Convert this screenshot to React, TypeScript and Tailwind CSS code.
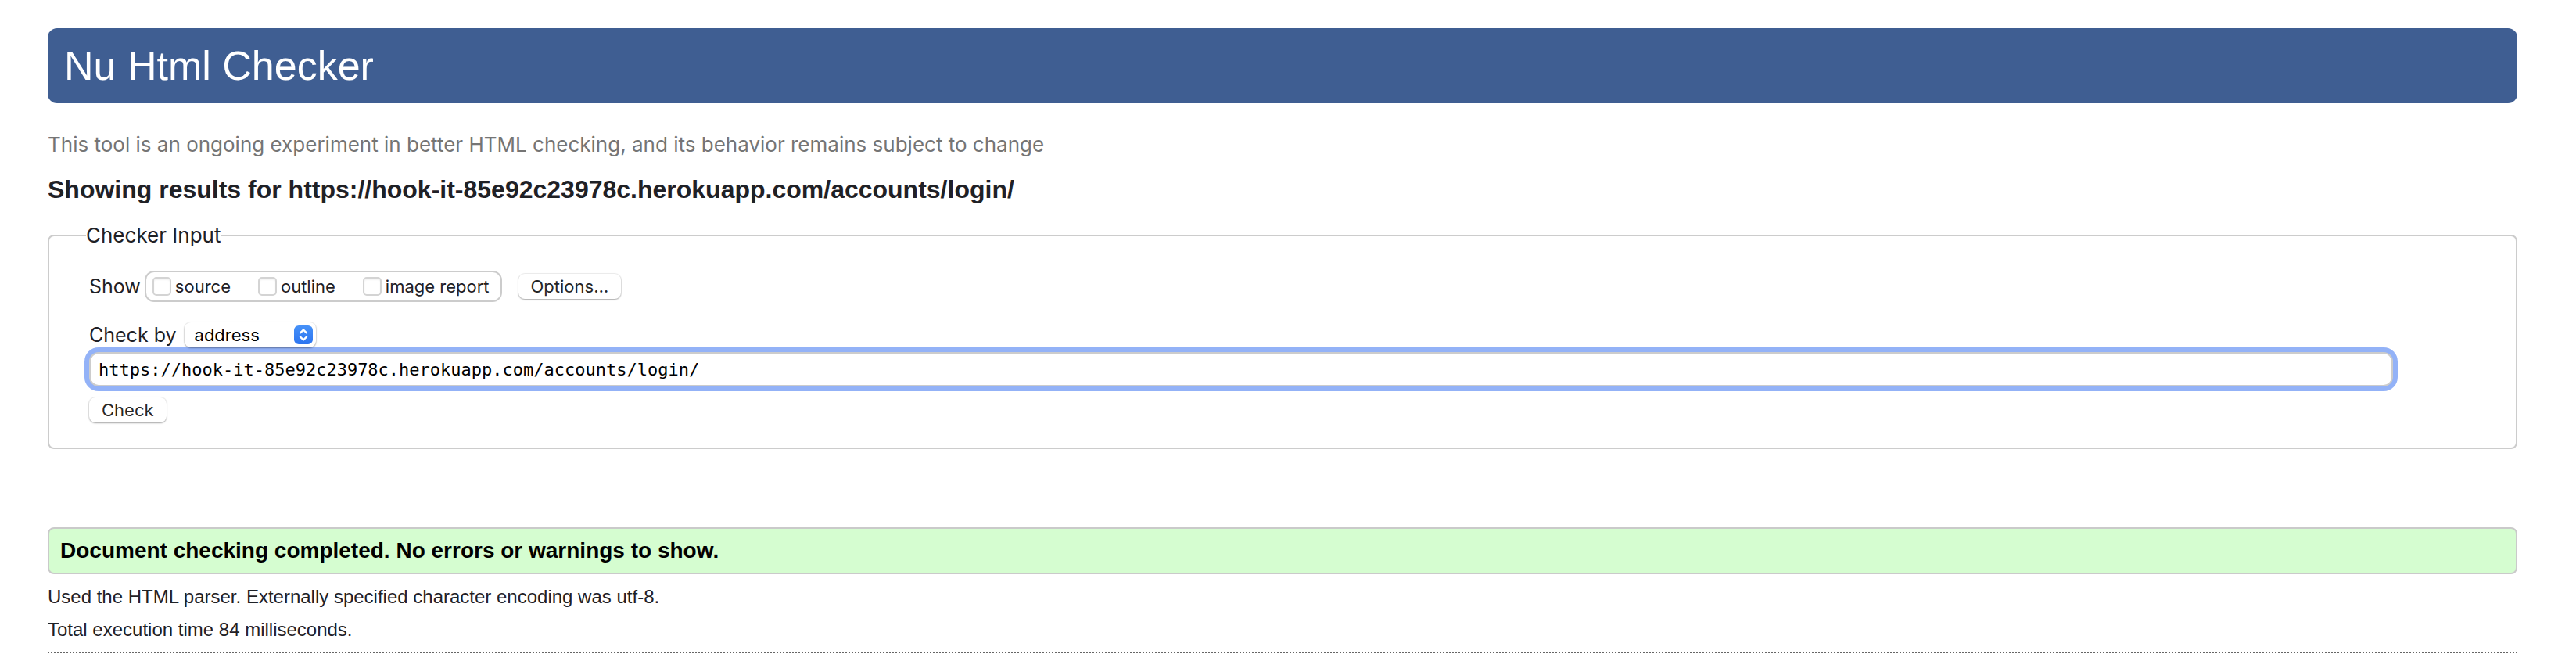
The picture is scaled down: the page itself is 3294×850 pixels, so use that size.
import { useState } from "react";

const sans = "font-['Liberation_Sans',Arial,sans-serif]";
const ui = "font-[Inter,sans-serif]";
const pushButton =
  "h-8 rounded-lg bg-white text-[22px] leading-8 text-[#262626] shadow-[0_1px_2px_rgba(0,0,0,0.3),0_0_1px_1px_rgba(0,0,0,0.07)]";

function ShowOption({ name, last = false }: { name: string; last?: boolean }) {
  return (
    <label className={`flex items-center gap-[5px] text-[22px] leading-9 ${last ? "" : "mr-[35px]"}`}>
      <input
        type="checkbox"
        name={name}
        className="size-6 appearance-none rounded-[5px] border-2 border-[#d4d4d4] bg-white shadow-[inset_0_2px_2px_rgba(0,0,0,0.05)] checked:bg-[#3b82f6]"
      />
      {name}
    </label>
  );
}

export default function App() {
  const [address, setAddress] = useState("https://hook-it-85e92c23978c.herokuapp.com/accounts/login/");

  return (
    <div className={`min-h-screen bg-white pt-9 pr-[75px] pl-[61px] text-[#1f2126] ${ui}`}>
      <header className="rounded-xl bg-[#3f5e92] px-[21px]">
        <h1 className={`text-[52px] leading-24 text-white ${sans}`}>Nu Html Checker</h1>
      </header>

      <main>
        <p className="mt-[35px] text-[26px] leading-9 text-[#757575]">
          This tool is an ongoing experiment in better HTML checking, and its behavior remains subject to change
        </p>
        <h2 className={`mt-[21px] text-[32px] leading-9 font-bold ${sans}`}>
          Showing results for https://hook-it-85e92c23978c.herokuapp.com/accounts/login/
        </h2>

        <form onSubmit={(e) => e.preventDefault()} className="mt-6">
          <fieldset className="rounded-lg border-2 border-[#cccccc] pr-[157px] pb-8 pl-[51px]">
            <legend className="-ml-1 text-[26px] leading-[34px]">Checker Input</legend>

            <div className="mt-7 flex items-center">
              <span className="mr-[5px] text-[25px] leading-10">Show</span>
              <div className="flex h-10 items-center rounded-xl border-2 border-[#cccccc] pr-3.5 pl-2">
                <ShowOption name="source" />
                <ShowOption name="outline" />
                <ShowOption name="image report" last />
              </div>
              <button type="button" className={`ml-[21px] px-4 ${pushButton}`}>
                Options…
              </button>
            </div>

            <div className="mt-[22px] flex items-center">
              <label htmlFor="docselect" className="mr-2.5 text-[25px] leading-10">
                Check by
              </label>
              <div className="grid items-center">
                <select
                  id="docselect"
                  className="col-start-1 row-start-1 h-8 w-[168px] appearance-none rounded-lg bg-white pl-[13px] text-[22px] leading-8 text-black shadow-[0_1px_2px_rgba(0,0,0,0.3),0_0_1px_1px_rgba(0,0,0,0.07)]"
                >
                  <option>address</option>
                  <option>file upload</option>
                  <option>text input</option>
                </select>
                <svg
                  aria-hidden="true"
                  viewBox="0 0 24 24"
                  className="pointer-events-none col-start-1 row-start-1 mr-1 size-6 justify-self-end rounded-md bg-linear-to-b from-[#4691f8] to-[#2c74f0]"
                  fill="none"
                  stroke="white"
                  strokeWidth="2.4"
                  strokeLinecap="round"
                  strokeLinejoin="round"
                >
                  <path d="M8 9.4 12 5.6l4 3.8M8 14.6l4 3.8 4-3.8" />
                </svg>
              </div>
            </div>

            <input
              type="url"
              aria-label="Address"
              value={address}
              onChange={(e) => setAddress(e.target.value)}
              className="mt-0.5 block h-11 w-full rounded-xl border-2 border-[#cccccc] bg-white px-2.5 font-['DejaVu_Sans_Mono',monospace] text-[22px] text-black shadow-[0_0_0_6px_#93b2f7] outline-none"
            />
            <button type="submit" className={`mt-3.5 px-4 ${pushButton}`}>
              Check
            </button>
          </fieldset>
        </form>

        <p
          className={`mt-25 rounded-lg border-2 border-[#cacaca] bg-[#d5fdd0] px-3.5 text-[28px] leading-14 font-bold text-black ${sans}`}
        >
          Document checking completed. No errors or warnings to show.
        </p>
        <p className={`mt-[11px] text-[24px] leading-9 ${sans}`}>
          Used the HTML parser. Externally specified character encoding was utf-8.
        </p>
        <p className={`mt-1.5 text-[24px] leading-9 ${sans}`}>Total execution time 84 milliseconds.</p>
      </main>
      <hr className="mt-2.5 border-t-2 border-dotted border-[#666666]" />
    </div>
  );
}
